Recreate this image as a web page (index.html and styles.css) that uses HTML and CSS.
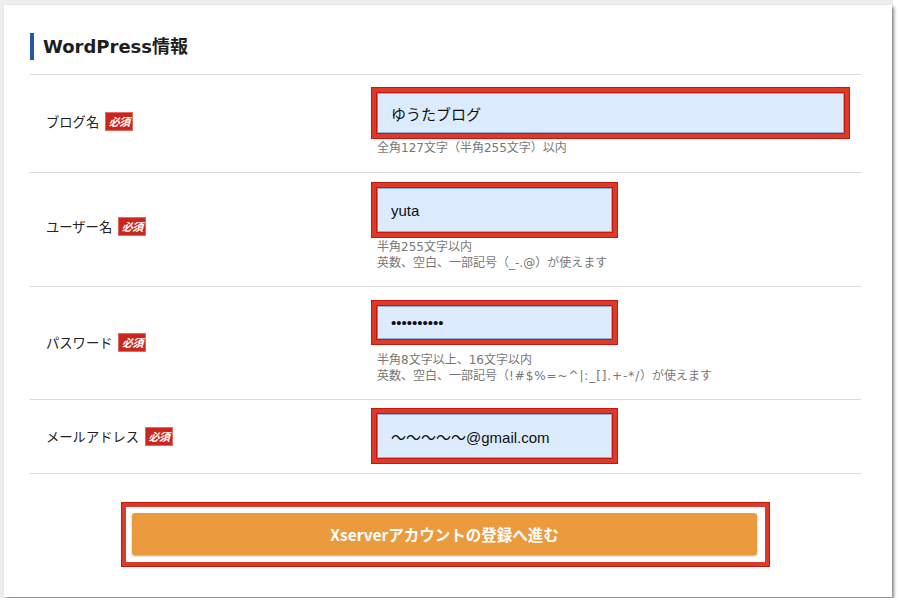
FILE: index.html
```html
<!DOCTYPE html>
<html lang="ja">
<head>
<meta charset="utf-8">
<title>WordPress情報</title>
<link rel="stylesheet" href="styles.css">
</head>
<body>
<div class="frame">
  <div class="card">
    <h2 class="heading">WordPress情報</h2>
    <div class="rows">
      <div class="row row-1">
        <div class="label">ブログ名<span class="badge">必須</span></div>
        <div class="field">
          <div class="mark mark-wide"><input class="input input-wide" type="text" value="ゆうたブログ" readonly></div>
          <p class="hint">全角127文字（半角255文字）以内</p>
        </div>
      </div>
      <div class="row row-2">
        <div class="label">ユーザー名<span class="badge">必須</span></div>
        <div class="field">
          <div class="mark"><input class="input" type="text" value="yuta" readonly></div>
          <p class="hint">半角255文字以内<br>英数、空白、一部記号（_-.@）が使えます</p>
        </div>
      </div>
      <div class="row row-3">
        <div class="label">パスワード<span class="badge">必須</span></div>
        <div class="field">
          <div class="mark"><input class="input input-short" type="password" value="abcdefghij" readonly></div>
          <p class="hint hint-gap">半角8文字以上、16文字以内<br>英数、空白、一部記号（<span class="sym">!#$%=~^|:_[].+-*/</span>）が使えます</p>
        </div>
      </div>
      <div class="row row-4">
        <div class="label">メールアドレス<span class="badge">必須</span></div>
        <div class="field">
          <div class="mark"><input class="input" type="text" value="〜〜〜〜〜@gmail.com" readonly></div>
        </div>
      </div>
    </div>
    <div class="submit-area">
      <div class="submit-mark">
        <button class="submit" type="button">Xserverアカウントの登録へ進む</button>
      </div>
    </div>
  </div>
</div>
</body>
</html>
```
FILE: styles.css
```css
html, body {
  margin: 0;
  padding: 0;
  background: #ffffff;
}

.frame {
  width: 893px;
  height: 598px;
  background: #eeeeee;
  padding: 5px 0 0 4px;
  box-sizing: border-box;
}

.card {
  width: 888px;
  height: 592px;
  background: #ffffff;
  box-shadow: 2px 2px 3px rgba(0, 0, 0, 0.45);
  box-sizing: border-box;
  padding: 28px 31px 0 26px;
  color: #222222;
  font-family: "Noto Sans CJK JP", sans-serif;
}

.heading {
  margin: 0 0 14px 0;
  height: 27px;
  line-height: 27px;
  border-left: 4px solid #2457a5;
  padding-left: 9px;
  font-family: "DejaVu Sans", "Noto Sans CJK JP", sans-serif;
  font-weight: bold;
  font-size: 18px;
  color: #1e1e1e;
}

.rows {
  border-top: 1px solid #dadada;
}

.row {
  display: grid;
  grid-template-columns: 341px 1fr;
  align-items: center;
  border-bottom: 1px solid #dadada;
}

.row-1 { padding: 12px 0 16px; }
.row-2 { padding: 9px 0 15px; }
.row-3 { padding: 13px 0 15px; }
.row-4 { padding: 8px 0 9px; }

.label {
  padding-left: 16px;
  font-size: 13.3px;
  display: flex;
  align-items: center;
}

.badge {
  display: inline-block;
  margin-left: 6px;
  width: 28px;
  height: 19px;
  box-sizing: border-box;
  border: 1px solid #e36a62;
  background: #c9271c;
  color: #ffffff;
  font-size: 11px;
  font-weight: bold;
  font-style: italic;
  line-height: 17px;
  text-align: center;
  letter-spacing: -0.5px;
}

.field {
  display: flex;
  flex-direction: column;
  align-items: flex-start;
}

.mark {
  border: 6px solid #dc3b2a;
  outline: 1px solid #c5170d;
  outline-offset: -1px;
  line-height: 0;
}

.input {
  display: block;
  width: 235px;
  height: 44px;
  box-sizing: border-box;
  margin: 0;
  padding: 0 13px;
  border: 1px solid #8db0dc;
  border-left-color: #5d8fd0;
  background: #dcebfd;
  box-shadow: 0 0 0 1px #c5170d;
  font-family: "Liberation Sans", "Noto Sans CJK JP", sans-serif;
  font-size: 15px;
  color: #111111;
  outline: none;
}

.input-wide {
  width: 467px;
  height: 40px;
}

.input-short {
  height: 33px;
}

.hint {
  margin: 1px 0 0;
  font-family: "DejaVu Sans", "Noto Sans CJK JP", sans-serif;
  font-size: 12px;
  line-height: 16px;
  color: #777777;
  padding-left: 6px;
}

.hint-gap {
  margin-top: 7px;
}

.sym {
  letter-spacing: 0.9px;
}

.submit-area {
  display: flex;
  justify-content: center;
  padding-top: 28px;
}

.submit-mark {
  border: 5px solid #dc3b2a;
  outline: 1px solid #c5170d;
  outline-offset: -1px;
  padding: 6px 8px 7px 6px;
  background: #ffffff;
  line-height: 0;
}

.submit {
  display: block;
  width: 625px;
  height: 42px;
  margin: 0;
  border: 0;
  border-radius: 3px;
  background: #eb9a3e;
  box-shadow: 0 1px 2px rgba(0, 0, 0, 0.35);
  color: #ffffff;
  font-family: "Noto Sans CJK JP", sans-serif;
  font-weight: bold;
  font-size: 15.5px;
  line-height: 42px;
  padding: 0;
}
```
